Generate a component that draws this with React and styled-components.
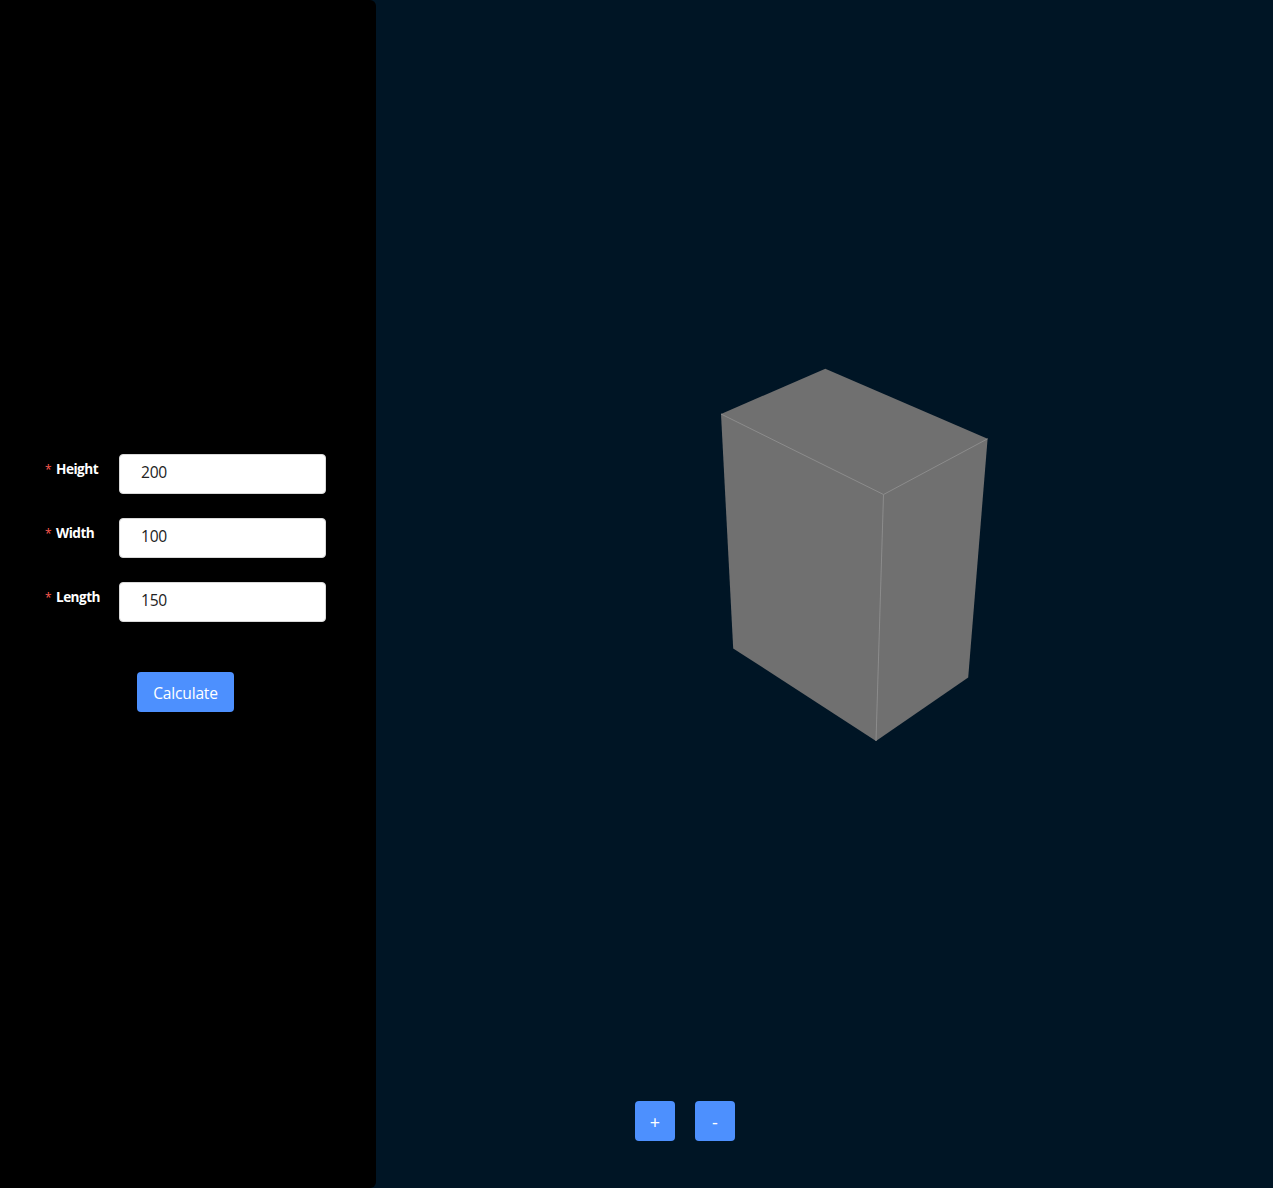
import React, { useState } from "react";
import styled, { createGlobalStyle } from "styled-components";

const GlobalStyle = createGlobalStyle`
  *, *::before, *::after { box-sizing: border-box; }
  body {
    margin: 0;
    background: #001525;
    font-family: "Open Sans", "Noto Sans", sans-serif;
  }
`;

const Page = styled.div`
  display: flex;
  height: 100vh;
  overflow: hidden;
  background: #001525;
`;

const Sidebar = styled.aside`
  flex: 0 0 376px;
  display: flex;
  flex-direction: column;
  justify-content: center;
  padding: 0 50px 22px 45px;
  background: #000;
  border-radius: 0 6px 6px 0;
`;

const Form = styled.form`
  display: flex;
  flex-direction: column;
  gap: 24px;
`;

const Field = styled.div`
  display: grid;
  grid-template-columns: 74px 207px;
  height: 40px;
`;

const Label = styled.label`
  display: flex;
  gap: 5px;
  padding-top: 4px;
  color: #fff;
  font-size: 13.6px;
  font-weight: 700;
  line-height: 22px;
  letter-spacing: ${(p) => p.$tracking};
`;

const Required = styled.span`
  width: 6px;
  padding-top: 1px;
  color: #ff5a50;
  font-size: 12px;
  font-weight: 400;
  letter-spacing: 0;
`;

const NumberInput = styled.input`
  width: 100%;
  height: 40px;
  padding: 0 21px 4px;
  border: 1px solid #d9d9d9;
  border-radius: 4px;
  background: #fff;
  color: #222;
  font: 400 15.6px "Open Sans", "Noto Sans", sans-serif;
  letter-spacing: -0.25px;
  outline: none;
`;

const Button = styled.button`
  display: flex;
  align-items: center;
  justify-content: center;
  width: ${(p) => p.$width}px;
  height: 40px;
  padding: 2px 0 0;
  border: 0;
  border-radius: 4px;
  background: #4d90fe;
  color: #fff;
  font: 400 ${(p) => p.$size || 15.6}px "Open Sans", "Noto Sans", sans-serif;
  letter-spacing: ${(p) => p.$tracking || "0"};
`;

const Actions = styled.div`
  display: flex;
  padding: 26px 0 0 92px;
`;

const Viewer = styled.main`
  flex: 1;
  display: flex;
  flex-direction: column;
  min-width: 0;
`;

const Stage = styled.div`
  flex: 1;
  padding: 360px 0 0 334px;
`;

const Drawing = styled.svg`
  display: block;
`;

const ZoomBar = styled.div`
  display: flex;
  gap: 20px;
  padding: 0 0 47px 259px;
`;

const fields = [
  { id: "height", label: "Height", initial: "200", tracking: "-0.5px" },
  { id: "width", label: "Width", initial: "100", tracking: "-0.5px" },
  { id: "length", label: "Length", initial: "150", tracking: "-0.55px" },
];

function Box() {
  return (
    <Drawing width="290" height="390" viewBox="710 360 290 390">
      <polygon
        points="825.3,368.8 987.6,438.8 968.2,677.6 876,741 733.2,648.4 721,414"
        fill="#707070"
      />
      <path
        d="M721 414L883.5 494.5L987.6 438.8M883.5 494.5L876 741"
        fill="none"
        stroke="#8c8c8c"
        strokeWidth="1"
      />
    </Drawing>
  );
}

export default function App() {
  const [values, setValues] = useState(() =>
    Object.fromEntries(fields.map((f) => [f.id, f.initial]))
  );

  return (
    <Page>
      <GlobalStyle />
      <Sidebar>
        <Form onSubmit={(e) => e.preventDefault()}>
          {fields.map((f) => (
            <Field key={f.id}>
              <Label htmlFor={f.id} $tracking={f.tracking}>
                <Required>*</Required>
                {f.label}
              </Label>
              <NumberInput
                id={f.id}
                value={values[f.id]}
                onChange={(e) => setValues({ ...values, [f.id]: e.target.value })}
              />
            </Field>
          ))}
          <Actions>
            <Button type="submit" $width={97} $tracking="-0.2px">
              Calculate
            </Button>
          </Actions>
        </Form>
      </Sidebar>
      <Viewer>
        <Stage>
          <Box />
        </Stage>
        <ZoomBar>
          <Button type="button" $width={40} $size={18}>+</Button>
          <Button type="button" $width={40} $size={18}>-</Button>
        </ZoomBar>
      </Viewer>
    </Page>
  );
}
